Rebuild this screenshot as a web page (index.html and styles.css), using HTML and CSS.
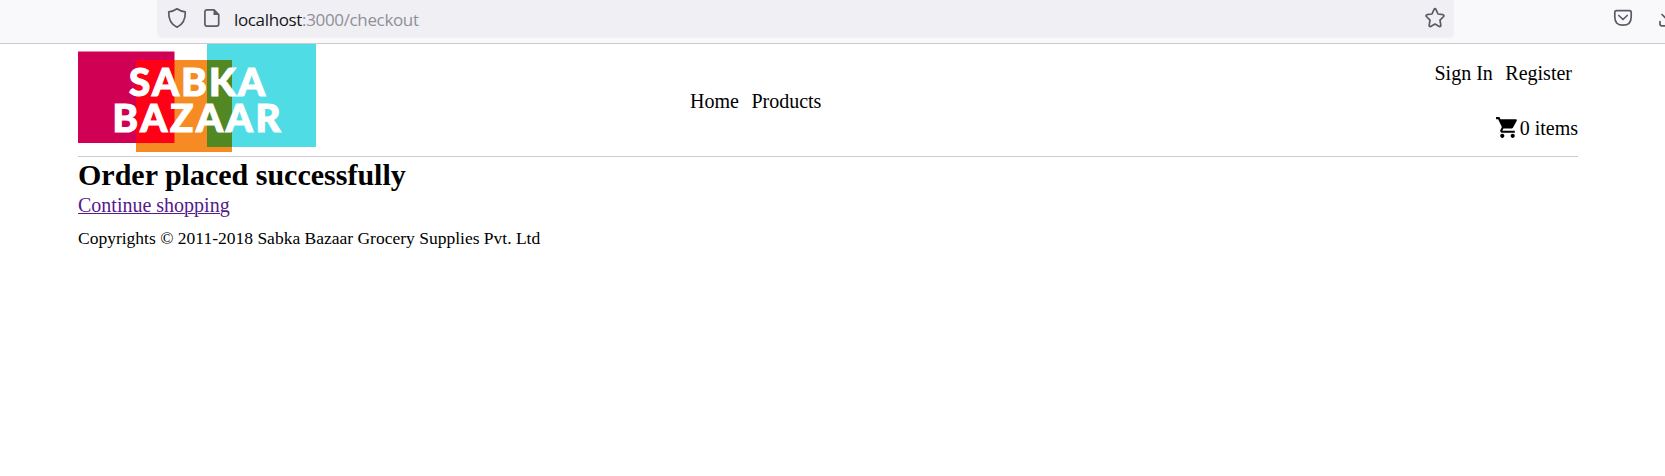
FILE: index.html
```html
<!DOCTYPE html>
<html lang="en">
<head>
<meta charset="utf-8">
<title>Sabka Bazaar</title>
<link rel="stylesheet" href="styles.css">
</head>
<body>
<div class="toolbar">
  <div class="urlbar">
    <svg class="shield" width="20" height="22" viewBox="0 0 20 22"><path d="M10 1.800C7.500 3.600 4.500 4.600 1.700 4.800C1.500 11.500 4 17.500 10 20.200C16 17.500 18.500 11.500 18.300 4.800C15.500 4.600 12.500 3.600 10 1.800Z"/></svg>
    <svg class="page-icon" width="16" height="20" viewBox="0 0 16 20"><path d="M3 1.800H10L14.700 6.500V16Q14.700 18.200 12.500 18.200H3Q.9 18.200 .9 16V4Q.9 1.800 3 1.800Z"/><path class="solid" d="M9.500 1.500L15 7H9.500Z"/></svg>
    <span class="url"><span class="host">localhost</span>:3000/checkout</span>
    <svg class="star" width="22" height="22" viewBox="0 0 22 22"><path d="M10.100 2.300Q11 .9 11.900 2.300L14 7L19 7.700Q20.600 8.200 19.600 9.500L16 13.200L16.800 18.200Q16.900 20 15.300 19.400L11 17L6.700 19.400Q5.100 20 5.200 18.200L6 13.200L2.400 9.500Q1.400 8.200 3 7.700L8 7Z"/></svg>
  </div>
  <svg class="pocket" width="20" height="18" viewBox="0 0 20 18"><path d="M3.500 1.700H16.500Q18.200 1.700 18.200 3.500V8Q18.200 16.200 10 16.200Q1.800 16.200 1.800 8V3.500Q1.800 1.700 3.500 1.700Z"/><path d="M5.800 6.500L10 10.500L14.200 6.500"/></svg>
  <svg class="download" width="20" height="18" viewBox="0 0 20 18"><path d="M3 4.500L9.500 11L16 4.500M1 11.500V14Q1 15.800 3 15.800H17Q19 15.800 19 14V11.500"/></svg>
</div>
<div class="page">
  <header class="header">
    <svg class="logo" width="238" height="108" viewBox="0 0 238 108">
      <rect x="0" y="7.500" width="96.500" height="91.500" fill="#d00055"/>
      <rect x="58" y="16" width="96" height="92" fill="#f68b24"/>
      <rect x="129" y="0" width="109" height="103" fill="#50dce4"/>
      <rect x="58" y="16" width="38.500" height="83" fill="#ff0017"/>
      <rect x="129" y="16" width="25" height="87" fill="#518824"/>
      <text x="51" y="51.500" textLength="136">SABKA</text>
      <text x="34.500" y="87.500" textLength="168">BAZAAR</text>
    </svg>
    <nav class="nav"><a>Home</a><a>Products</a></nav>
    <div class="account">
      <div class="links"><a>Sign In</a><a>Register</a></div>
      <div class="cart">
        <svg width="25" height="25" viewBox="0 0 24 24"><path d="M7 18c-1.100 0-1.990.9-1.990 2S5.900 22 7 22s2-.9 2-2-.9-2-2-2zM1 2v2h2l3.600 7.590-1.350 2.450c-.16.280-.25.610-.25.960 0 1.100.9 2 2 2h12v-2H7.420c-.14 0-.25-.11-.25-.25l.03-.12.9-1.630h7.450c.75 0 1.410-.41 1.750-1.030l3.580-6.490A1 1 0 0 0 20 4H5.210l-.94-2H1zm16 16c-1.100 0-1.990.9-1.990 2s.89 2 1.990 2 2-.9 2-2-.9-2-2-2z"/></svg><span>0 items</span>
      </div>
    </div>
  </header>
  <main>
    <h1>Order placed successfully</h1>
    <a class="continue" href="#">Continue shopping</a>
  </main>
  <footer>Copyrights © 2011-2018 Sabka Bazaar Grocery Supplies Pvt. Ltd</footer>
</div>
</body>
</html>
```
FILE: styles.css
```css
* { box-sizing: border-box; }
body {
  margin: 0;
  background: #fff;
  color: #000;
  font: 20px/23px "Liberation Serif", "Times New Roman", serif;
  overflow: hidden;
}
svg { display: block; flex: none; }

.toolbar {
  display: flex;
  height: 44px;
  padding-left: 157px;
  background: #f9f9fb;
  border-bottom: 1px solid #ccc;
  overflow: hidden;
}
.toolbar path {
  fill: none;
  stroke: #5b5b66;
  stroke-width: 1.7;
  stroke-linecap: round;
  stroke-linejoin: round;
}
.toolbar .solid { fill: #5b5b66; stroke: none; }
.urlbar {
  display: flex;
  flex: none;
  width: 1297px;
  height: 38px;
  padding-left: 10px;
  background: #f0f0f4;
  border-radius: 0 0 5px 5px;
}
.shield { margin-top: 7px; }
.page-icon { margin: 8px 0 0 17px; }
.url {
  margin: 8px 0 0 14px;
  font: 17px/24px "Open Sans", "Noto Sans", sans-serif;
  letter-spacing: -0.35px;
  color: #8f8f98;
}
.host { color: #15141a; }
.star { margin: 7px 8px 0 auto; }
.pocket { margin: 9px 0 0 159px; }
.download { margin: 10px 0 0 26px; }

.page { width: 1500px; margin-left: 78px; }
.header {
  display: flex;
  height: 113px;
  border-bottom: 1px solid #ccc;
}
.logo text {
  font: 900 38.5px Lato, sans-serif;
  fill: #fff;
  stroke: #fff;
  stroke-width: 1.2px;
}
.nav { display: flex; gap: 12.5px; margin: 46px 0 0 374px; }
.account {
  display: flex;
  flex-direction: column;
  align-items: flex-end;
  margin-left: auto;
  padding-top: 18px;
}
.links { display: flex; gap: 12.5px; margin-right: 6px; }
.cart { display: flex; align-items: center; margin-top: 32px; }
.cart svg { margin-top: -3px; }
h1 { margin: 0; font-size: 30px; line-height: 35px; }
.continue {
  display: block;
  width: max-content;
  margin-top: 2px;
  color: #551a8b;
  text-decoration-thickness: 1px;
}
footer { margin-top: 11px; font-size: 17.5px; line-height: 20px; }
```
